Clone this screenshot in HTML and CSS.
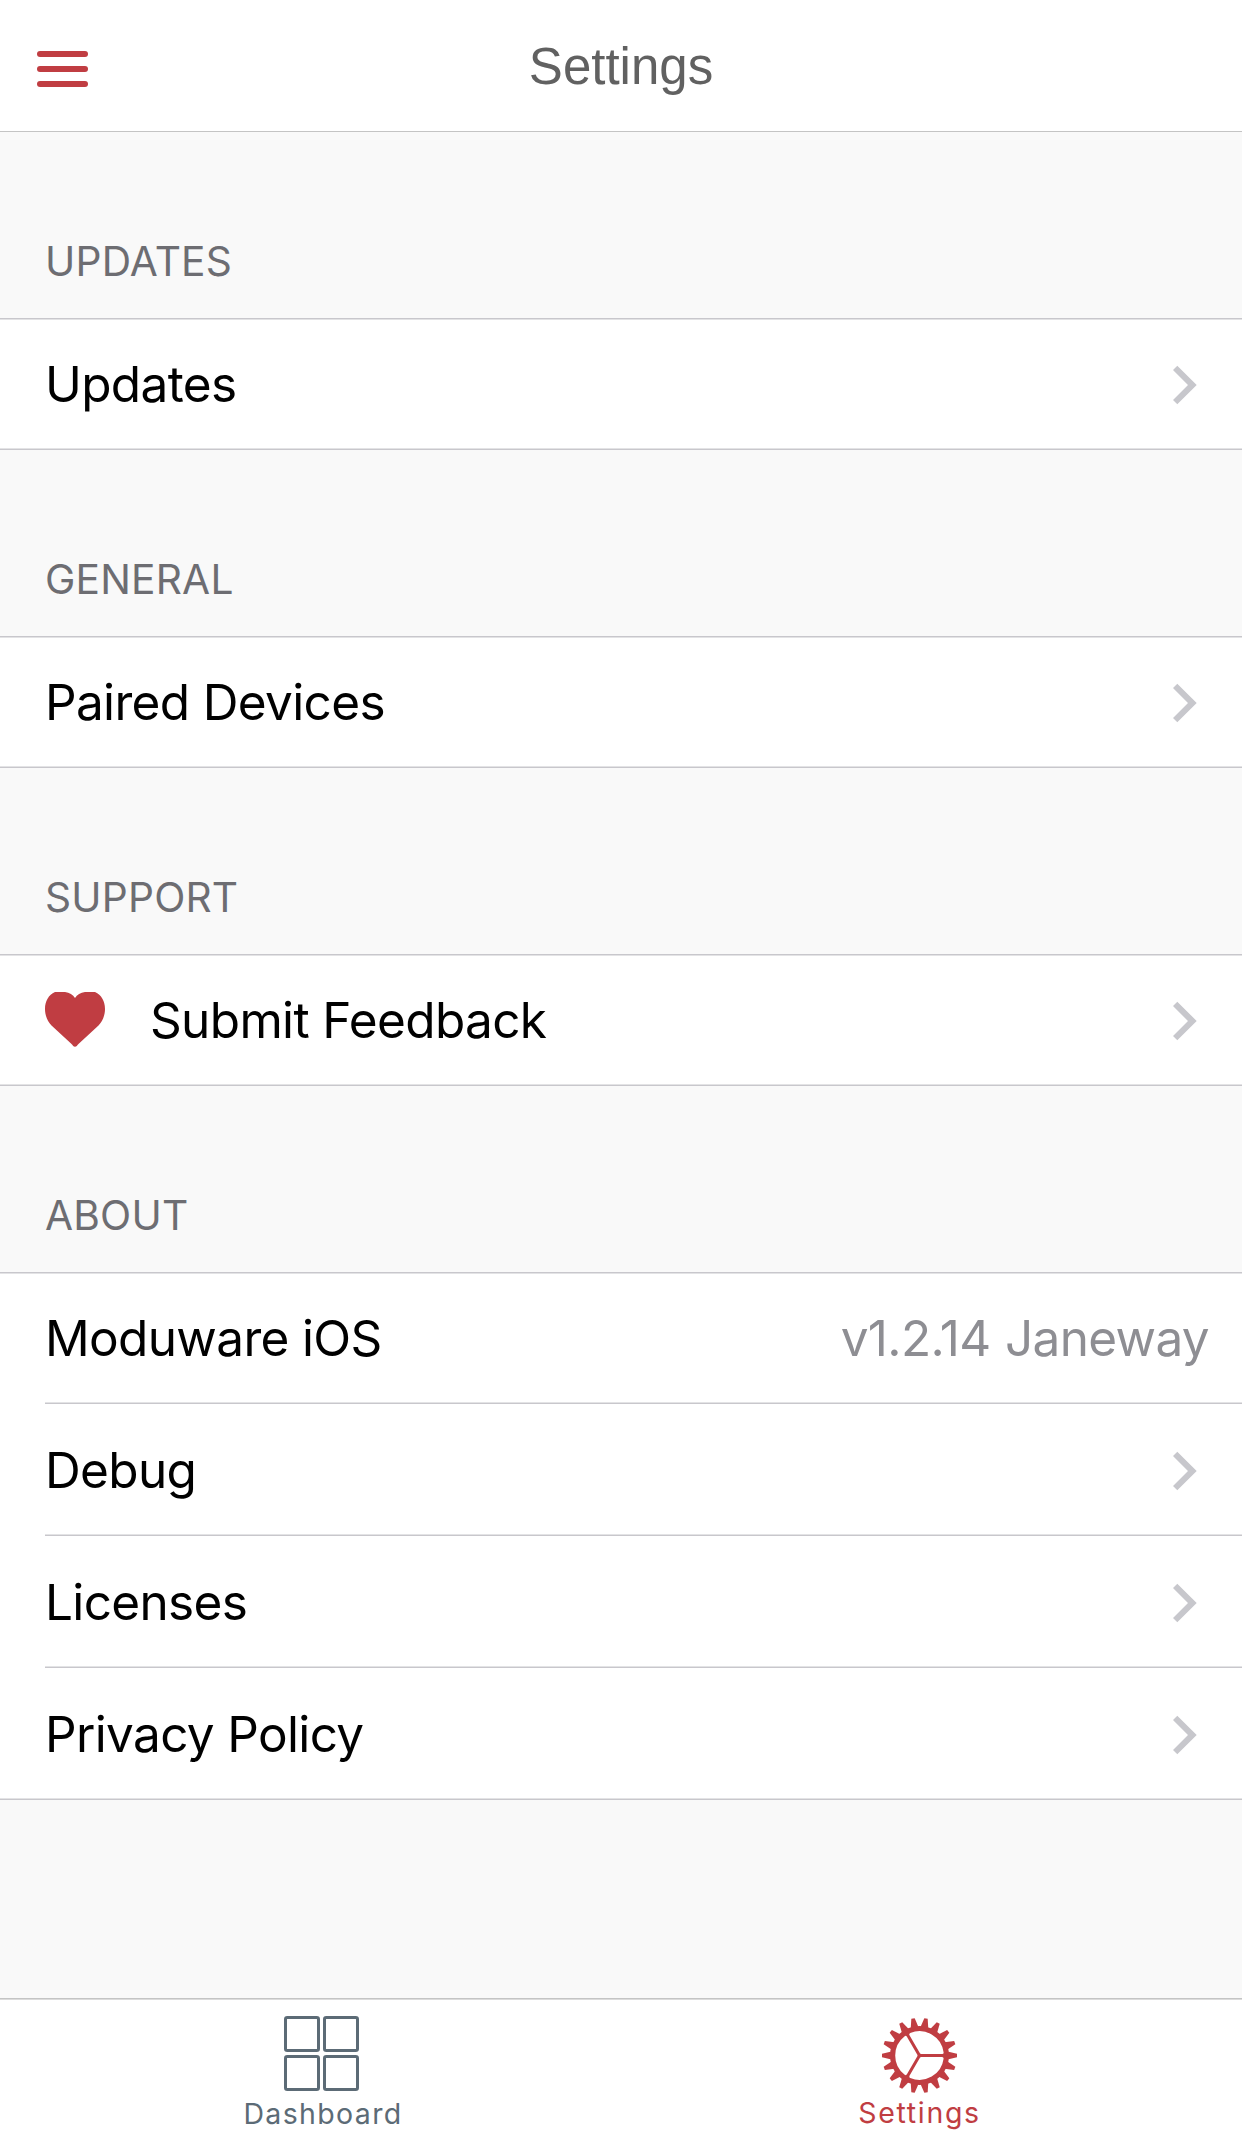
FILE: index.html
```html
<!DOCTYPE html>
<html lang="en">
<head>
<meta charset="utf-8">
<title>Settings</title>
<link rel="stylesheet" href="styles.css">
</head>
<body>
<svg class="defs" aria-hidden="true">
  <symbol id="chevron" viewBox="0 0 24 40">
    <path d="M4.3 .7 L23.7 20 L4.3 39.3 L0 35 L15 20 L0 5 Z" fill="#c7c7cc"/>
  </symbol>
</svg>
<div class="app">
  <header class="navbar">
    <button class="menu" aria-label="Menu"><span></span><span></span><span></span></button>
    <h1 class="title">Settings</h1>
  </header>

  <main class="content">
    <h2 class="group-title">UPDATES</h2>
    <ul class="list">
      <li class="row"><span class="label">Updates</span><svg class="chevron"><use href="#chevron"/></svg></li>
    </ul>

    <h2 class="group-title">GENERAL</h2>
    <ul class="list">
      <li class="row"><span class="label">Paired Devices</span><svg class="chevron"><use href="#chevron"/></svg></li>
    </ul>

    <h2 class="group-title">SUPPORT</h2>
    <ul class="list">
      <li class="row">
        <svg class="heart" viewBox="0 0 60 60"><path d="M30 54.8 C28.5 54.8 28 53.5 26 51.5 L6.500 33.500 C2 28.500 0 23 0 17 C0 9 3.500 3 10 0 L20 0 C24.500 0.500 28 3 30 6 C32 3 35.500 0.500 40 0 L50 0 C56.500 3 60 9 60 17 C60 23 58 28.500 53.500 33.500 L34 51.500 C32 53.500 31.500 54.800 30 54.800 Z" fill="#c03d42"/></svg>
        <span class="label">Submit Feedback</span><svg class="chevron"><use href="#chevron"/></svg>
      </li>
    </ul>

    <h2 class="group-title">ABOUT</h2>
    <ul class="list">
      <li class="row"><span class="label">Moduware iOS</span><span class="value">v1.2.14 Janeway</span></li>
      <li class="row"><span class="label">Debug</span><svg class="chevron"><use href="#chevron"/></svg></li>
      <li class="row"><span class="label">Licenses</span><svg class="chevron"><use href="#chevron"/></svg></li>
      <li class="row"><span class="label">Privacy Policy</span><svg class="chevron"><use href="#chevron"/></svg></li>
    </ul>
  </main>

  <nav class="tabbar">
    <a class="tab tab-dashboard">
      <svg class="tab-icon" viewBox="0 0 75 75" fill="none" stroke="#5c6b76" stroke-width="3">
        <rect x="1.5" y="1.5" width="33" height="33" rx="1.8"/>
        <rect x="40.5" y="1.5" width="33" height="33" rx="1.8"/>
        <rect x="1.5" y="40.5" width="33" height="33" rx="1.8"/>
        <rect x="40.5" y="40.5" width="33" height="33" rx="1.8"/>
      </svg>
      <span class="tab-label">Dashboard</span>
    </a>
    <a class="tab tab-settings">
      <svg class="tab-icon" viewBox="-37.5 -37.5 75 75">
        <defs>
          <path id="tooth" d="M28 -4 L37.500 -1.700 L37.500 1.700 L28 4 Z"/>
          <g id="teeth"><use href="#tooth"/><use href="#tooth" transform="rotate(20)"/><use href="#tooth" transform="rotate(40)"/></g>
          <g id="teeth-third"><use href="#teeth"/><use href="#teeth" transform="rotate(60)"/></g>
          <path id="hole" d="M1.730 3 L22.600 3 A22.800 22.800 0 0 1 -8.700 21.070 Z"/>
        </defs>
        <g fill="#c03d42">
          <circle r="29.500"/>
          <use href="#teeth-third"/><use href="#teeth-third" transform="rotate(120)"/><use href="#teeth-third" transform="rotate(240)"/>
        </g>
        <g fill="#fff" stroke="#fff" stroke-width="3" stroke-linejoin="round">
          <use href="#hole"/><use href="#hole" transform="rotate(120)"/><use href="#hole" transform="rotate(240)"/>
        </g>
      </svg>
      <span class="tab-label">Settings</span>
    </a>
  </nav>
</div>
</body>
</html>
```
FILE: styles.css
```css
* { box-sizing: border-box; }

body {
  margin: 0;
  background: #f9f9f9;
  color: #000;
  font-family: Inter, "Liberation Sans", sans-serif;
}

.defs { display: none; }

.app {
  display: flex;
  flex-direction: column;
  width: 1242px;
  height: 2148px;
}

/* Navigation bar */
.navbar {
  display: grid;
  grid-template-columns: 1fr auto 1fr;
  align-items: center;
  height: 132px;
  padding: 0 37px;
  background: #fff;
  box-shadow: inset 0 -1px #c4c4c4;
}

.menu {
  display: flex;
  flex-direction: column;
  gap: 9px;
  width: 51px;
  margin-top: 6px;
  padding: 0;
  border: 0;
  background: none;
}

.menu span {
  height: 6px;
  border-radius: 3px;
  background: #c03d42;
}

.title {
  margin: 2px 0 0;
  color: #616161;
  font: 400 51px/60px "Liberation Sans", sans-serif;
}

/* Grouped lists */
.content { flex: 1; }

.group-title {
  display: flex;
  align-items: flex-end;
  height: 186px;
  margin: 0;
  padding: 0 45px 31px;
  color: #6d6d72;
  font-size: 40.7px;
  font-weight: 400;
  line-height: 50px;
  letter-spacing: 0.2px;
}

.list {
  margin: 0;
  padding: 0;
  list-style: none;
  background: #fff;
  box-shadow: inset 0 1px #c8c7cc, inset 0 2px #e3e3e5, inset 0 -1px #c8c7cc, inset 0 -2px #e3e3e5;
}

.row {
  display: flex;
  align-items: center;
  height: 132px;
  padding: 0 45px;
  font-size: 49.5px;
  line-height: 60px;
  letter-spacing: -0.65px;
}

.row:not(:last-child) {
  background: linear-gradient(#e3e3e5 50%, #c8c7cc 50%) 45px 100% / 100% 2px no-repeat;
}

.label { flex: 1; }

.value {
  margin-right: -12px;
  color: #8e8e93;
  word-spacing: 1px;
}

.chevron {
  width: 24px;
  height: 40px;
  margin-top: 2px;
}

.heart {
  width: 60px;
  height: 60px;
  margin: 4px 45px 0 0;
}

/* Tab bar */
.tabbar {
  display: grid;
  grid-template-columns: 598px 598px;
  justify-content: center;
  height: 150px;
  padding-right: 1px;
  background: #fff;
  box-shadow: inset 0 1px #c4c4c4, inset 0 2px #dcdcdc;
}

.tab {
  display: flex;
  flex-direction: column;
  align-items: center;
}

.tab-icon {
  width: 75px;
  height: 75px;
}

.tab-label {
  font-size: 28.5px;
  line-height: 34px;
}

.tab-dashboard {
  gap: 6px;
  padding-top: 18px;
  color: #5c6b76;
}

.tab-dashboard .tab-label {
  padding-left: 3px;
  letter-spacing: 1.36px;
}

.tab-settings {
  gap: 3px;
  padding-top: 20px;
  color: #c03d42;
}

.tab-settings .tab-label { letter-spacing: 1.7px; }
```
